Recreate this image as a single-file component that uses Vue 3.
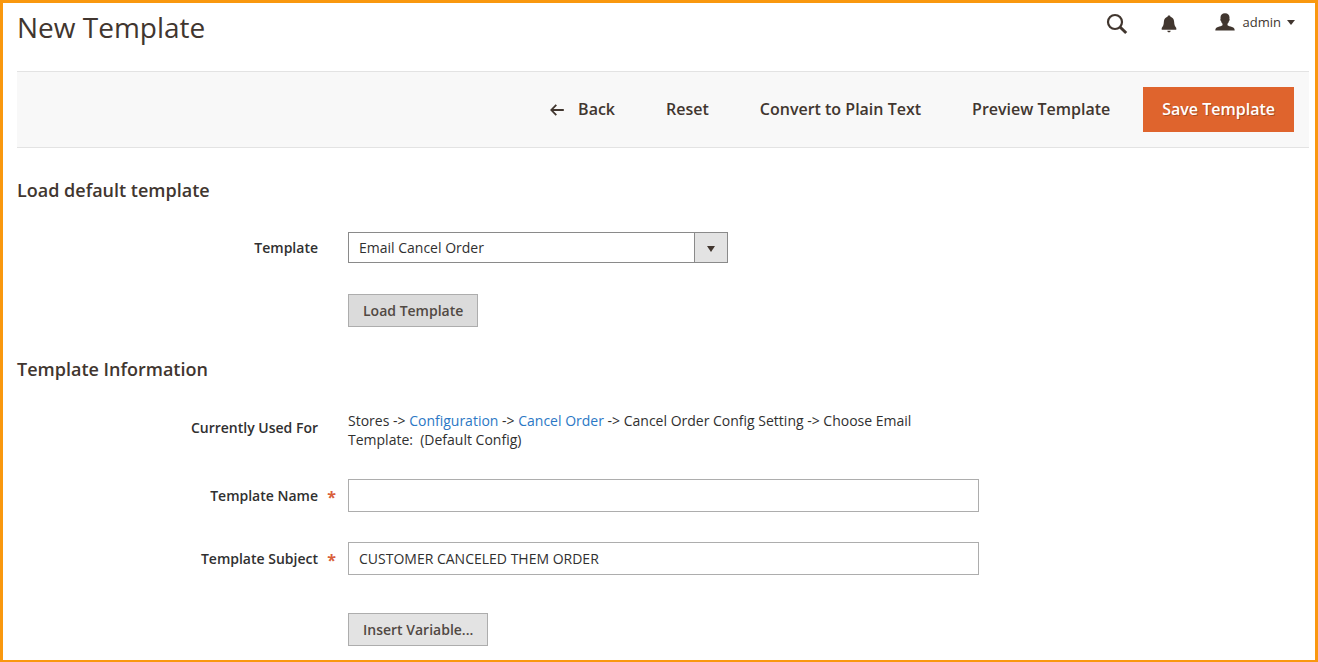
<script setup>
import { ref } from 'vue'

const template = ref('Email Cancel Order')
const templateName = ref('')
const templateSubject = ref('CUSTOMER CANCELED THEM ORDER')
</script>

<template>
  <div class="page">
    <header class="header">
      <h1 class="title">New Template</h1>
      <div class="tools">
        <button class="tool search" type="button" aria-label="Search">
          <svg width="22" height="22" viewBox="0 0 22 22" aria-hidden="true">
            <circle cx="9" cy="9" r="7" fill="none" stroke="#41362f" stroke-width="2.2" />
            <path d="M14 14l6.2 6" fill="none" stroke="#41362f" stroke-width="3" />
          </svg>
        </button>
        <button class="tool bell" type="button" aria-label="Notifications">
          <svg width="16" height="18" viewBox="0 0 16 18" aria-hidden="true">
            <path
              d="M8 .5c.9 0 1.400.5 1.500 1.300C11.700 2.400 12.900 4.200 13.100 6.600c.2 3 .6 4.600 2.200 6.400v1.800H.7V13c1.600-1.800 2-3.400 2.200-6.400.2-2.400 1.400-4.200 3.600-4.800C6.600 1 7.100.5 8 .5z"
              fill="#41362f"
            />
            <path d="M6.300 15.700h3.400c-.2 1-.8 1.600-1.700 1.600s-1.500-.6-1.700-1.600z" fill="#41362f" />
          </svg>
        </button>
        <button class="tool account" type="button">
          <svg width="20" height="18" viewBox="0 0 20 18" aria-hidden="true">
            <path
              d="M10 .3c2.900 0 4.500 1.700 4.500 4.300 0 .5 0 .9-.1 1.300.5.300.4 1.500-.4 2-.3 1.300-.8 2.200-1.500 2.900v1.500c.9.800 2.700 1.200 4.500 1.700 1.900.5 2.700 1.500 2.700 3.600H.3c0-2.100.8-3.100 2.700-3.600 1.800-.5 3.600-.9 4.500-1.700v-1.500C6.800 10.100 6.300 9.200 6 7.900c-.8-.5-.9-1.700-.4-2-.1-.4-.1-.8-.1-1.300C5.500 2 7.100.3 10 .3z"
              fill="#41362f"
            />
          </svg>
          <span class="account-name">admin</span>
          <svg width="8" height="5" viewBox="0 0 8 5" aria-hidden="true">
            <path d="M0 0h8L4 5z" fill="#41362f" />
          </svg>
        </button>
      </div>
    </header>

    <div class="actions">
      <button class="action back" type="button">
        <svg width="14" height="12" viewBox="0 0 14 12" aria-hidden="true">
          <path d="M6.300.8L1.300 6l5 5.200M1.500 6h12.300" fill="none" stroke="#41362f" stroke-width="1.800" />
        </svg>
        <span>Back</span>
      </button>
      <button class="action" type="button">Reset</button>
      <button class="action" type="button">Convert to Plain Text</button>
      <button class="action" type="button">Preview Template</button>
      <button class="action primary" type="button">Save Template</button>
    </div>

    <form class="form" @submit.prevent>
      <section>
        <h2 class="legend">Load default template</h2>
        <div class="row template-row">
          <label class="label" for="template">Template</label>
          <div class="select-wrap">
            <select id="template" v-model="template" class="select">
              <option>Email Cancel Order</option>
            </select>
            <span class="select-arrow" aria-hidden="true">
              <svg width="8" height="6" viewBox="0 0 8 6"><path d="M0 0h8L4 6z" fill="#41362f" /></svg>
            </span>
          </div>
        </div>
        <div class="row">
          <button class="secondary load" type="button">Load Template</button>
        </div>
      </section>

      <section class="information">
        <h2 class="legend">Template Information</h2>
        <div class="row used-row">
          <span class="label">Currently Used For</span>
          <div class="value">
            Stores -&gt; <a href="#configuration">Configuration</a> -&gt;
            <a href="#cancel-order">Cancel Order</a> -&gt; Cancel Order Config Setting -&gt; Choose Email
            Template:&nbsp; (Default Config)
          </div>
        </div>
        <div class="row name-row">
          <label class="label required" for="template-name">Template Name</label>
          <input id="template-name" v-model="templateName" class="input" type="text" required />
        </div>
        <div class="row subject-row">
          <label class="label required" for="template-subject">Template Subject</label>
          <input id="template-subject" v-model="templateSubject" class="input" type="text" required />
        </div>
        <div class="row">
          <button class="secondary" type="button">Insert Variable...</button>
        </div>
      </section>
    </form>
  </div>
</template>

<style>
body {
  margin: 0;
  background: #fff;
}
</style>

<style scoped>
.page,
.page * {
  box-sizing: border-box;
}

.page {
  min-height: 100vh;
  padding: 0 6px 14px 14px;
  border: 3px solid #f9980f;
  border-bottom-width: 2px;
  background: #fff;
  color: #303030;
  font-family: 'Open Sans', 'Noto Sans', sans-serif;
  font-size: 14px;
  line-height: 19px;
}

button,
input,
select {
  margin: 0;
  font: inherit;
  color: inherit;
}

button {
  cursor: pointer;
}

.header {
  display: flex;
  justify-content: space-between;
  height: 68px;
}

.title {
  margin: 5px 0 0;
  color: #41362f;
  font-size: 28px;
  font-weight: 400;
  line-height: 38px;
}

.tools {
  display: flex;
  align-items: center;
  height: 42px;
  padding-right: 14px;
}

.tool {
  display: flex;
  align-items: center;
  padding: 0;
  border: 0;
  background: none;
  color: #41362f;
}

.bell {
  margin-left: 33px;
}

.account {
  margin-left: 38px;
  padding-bottom: 4px;
  font-size: 13px;
}

.account-name {
  margin: 0 6px 0 8px;
}

.actions {
  display: flex;
  flex-wrap: wrap;
  align-items: center;
  justify-content: flex-end;
  padding: 15px;
  border-top: 1px solid #e3e3e3;
  border-bottom: 1px solid #e3e3e3;
  background: #f8f8f8;
}

.action {
  margin-right: 15px;
  padding: 0 18px;
  border: 0;
  background: none;
  color: #41362f;
  font-size: 16px;
  font-weight: 600;
  line-height: 45px;
}

.back {
  display: flex;
  align-items: center;
  gap: 14px;
}

.primary {
  margin-right: 0;
  padding: 0 19px;
  background: #df642d;
  color: #fff;
  text-shadow: 1px 1px 0 rgba(0, 0, 0, 0.25);
}

.form {
  padding-top: 29px;
}

.legend {
  margin: 0 0 29px;
  color: #41362f;
  font-size: 18px;
  font-weight: 600;
  line-height: 26px;
}

.row {
  display: grid;
  grid-template-columns: 331fr 631fr 330fr;
  align-items: center;
}

.label {
  position: relative;
  padding-right: 30px;
  font-weight: 600;
  text-align: right;
}

.required::after {
  content: '*';
  position: absolute;
  top: 2px;
  right: 12px;
  color: #d9603b;
  font-size: 16px;
  font-weight: 700;
}

.select-wrap {
  position: relative;
  width: 100%;
  max-width: 380px;
}

.select {
  display: block;
  width: 100%;
  height: 31px;
  padding: 0 40px 0 10px;
  border: 1px solid #8a8a8a;
  border-radius: 0;
  background: #fff;
  appearance: none;
}

.select-arrow {
  position: absolute;
  top: 1px;
  right: 1px;
  bottom: 1px;
  display: flex;
  align-items: center;
  justify-content: center;
  width: 33px;
  padding-top: 2px;
  border-left: 1px solid #8a8a8a;
  background: #e3e3e3;
  pointer-events: none;
}

.template-row {
  margin-bottom: 31px;
}

.secondary {
  grid-column: 2;
  justify-self: start;
  height: 33px;
  padding: 0 14px;
  border: 1px solid #adadad;
  background: #e3e3e3;
  color: #514943;
  font-weight: 600;
}

.load {
  background: #dbdbdb;
}

.information {
  padding-top: 29px;
}

.used-row {
  align-items: start;
  margin-bottom: 30px;
}

.used-row .label {
  padding-top: 7px;
}

.value {
  padding-right: 40px;
}

.value a {
  color: #2b78c5;
  text-decoration: none;
}

.input {
  width: 100%;
  height: 33px;
  padding: 0 10px;
  border: 1px solid #adadad;
  border-radius: 0;
  background: #fff;
}

.name-row {
  margin-bottom: 30px;
}

.subject-row {
  margin-bottom: 38px;
}
</style>
